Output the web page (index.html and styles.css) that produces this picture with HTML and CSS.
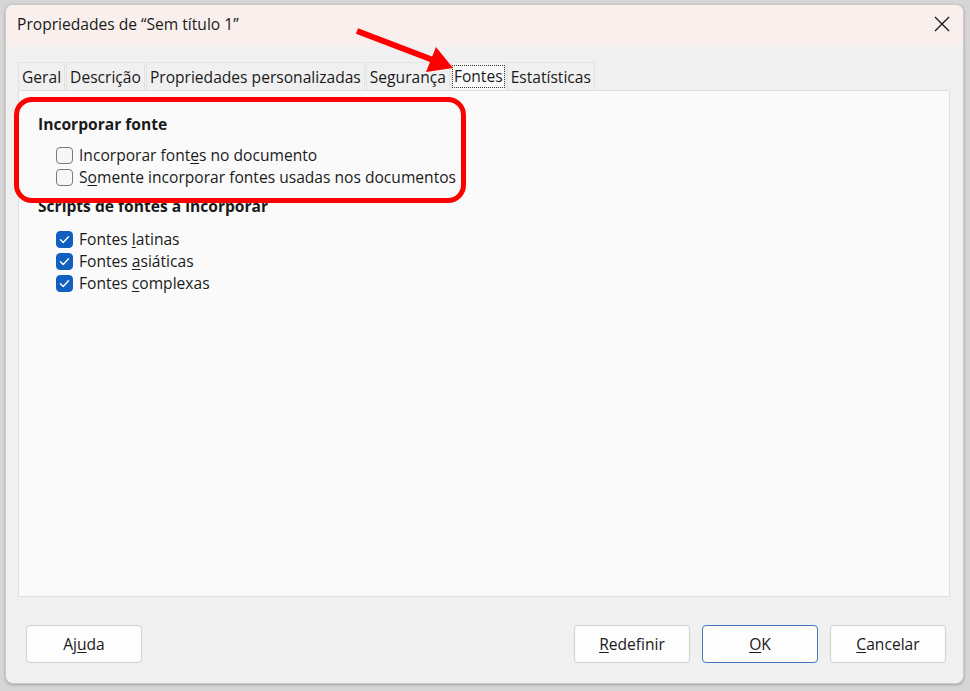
FILE: index.html
```html
<!DOCTYPE html>
<html lang="pt">
<head>
<meta charset="utf-8">
<title>Propriedades</title>
<link rel="stylesheet" href="styles.css">
</head>
<body>
<div class="window">
  <div class="titlebar">
    <span class="title">Propriedades de “Sem título 1”</span>
    <svg class="close" width="16" height="16" viewBox="0 0 16 16"><path d="M1 1 L15 15 M15 1 L1 15" stroke="#1a1a1a" stroke-width="1.4" fill="none"/></svg>
  </div>
  <div class="content">
    <div class="tabs">
      <div class="tab">Geral</div>
      <div class="tab">Descrição</div>
      <div class="tab">Propriedades personalizadas</div>
      <div class="tab">Segurança</div>
      <div class="tab active"><span class="focus">Fontes</span></div>
      <div class="tab">Estatísticas</div>
    </div>
    <div class="panel">
      <div class="group">
        <div class="heading">Incorporar fonte</div>
        <label class="row"><span class="cb"></span><span>Incorporar font<u>e</u>s no documento</span></label>
        <label class="row"><span class="cb"></span><span>S<u>o</u>mente incorporar fontes usadas nos documentos</span></label>
      </div>
      <div class="group second">
        <div class="heading">Scripts de fontes a incorporar</div>
        <label class="row"><span class="cb on"><svg width="17" height="17" viewBox="0 0 17 17"><path d="M4.5 8.8 L7.2 11.4 L12.5 5.8" stroke="#fff" stroke-width="1.4" fill="none" stroke-linecap="round" stroke-linejoin="round"/></svg></span><span>Fontes <u>l</u>atinas</span></label>
        <label class="row"><span class="cb on"><svg width="17" height="17" viewBox="0 0 17 17"><path d="M4.5 8.8 L7.2 11.4 L12.5 5.8" stroke="#fff" stroke-width="1.4" fill="none" stroke-linecap="round" stroke-linejoin="round"/></svg></span><span>Fontes <u>a</u>siáticas</span></label>
        <label class="row"><span class="cb on"><svg width="17" height="17" viewBox="0 0 17 17"><path d="M4.5 8.8 L7.2 11.4 L12.5 5.8" stroke="#fff" stroke-width="1.4" fill="none" stroke-linecap="round" stroke-linejoin="round"/></svg></span><span>Fontes <u>c</u>omplexas</span></label>
      </div>
    </div>
    <div class="buttons">
      <button class="btn help">Aj<u>u</u>da</button>
      <div class="right">
        <button class="btn"><u>R</u>edefinir</button>
        <button class="btn default"><u>O</u>K</button>
        <button class="btn"><u>C</u>ancelar</button>
      </div>
    </div>
  </div>
</div>
<div class="highlight"></div>
<svg class="arrow" width="970" height="100" viewBox="0 0 970 100">
  <line x1="357" y1="31" x2="433" y2="60" stroke="#ff0000" stroke-width="6"/>
  <polygon points="453,68 436,47 426,72" fill="#ff0000"/>
</svg>
</body>
</html>
```

FILE: styles.css
```css
html, body {
  margin: 0;
  padding: 0;
}
body {
  background: #d6d6d6;
  width: 970px;
  height: 691px;
  overflow: hidden;
  position: relative;
  font-family: "Open Sans", "Noto Sans", sans-serif;
  font-size: 15.6px;
  color: #1a1a1a;
}
.window {
  margin: 4px 0 0 5px;
  width: 959px;
  height: 680px;
  box-sizing: border-box;
  background: #f0f0f0;
  border: 1px solid #c9c9c9;
  border-radius: 8px;
  box-shadow: 0 1px 3px rgba(0,0,0,0.25);
  overflow: hidden;
  display: flex;
  flex-direction: column;
}
.titlebar {
  height: 41px;
  flex: none;
  background: #f9f0ee;
  display: flex;
  align-items: center;
  justify-content: space-between;
  padding: 0 13px 3px 11px;
  box-sizing: border-box;
}
.title {
  font-size: 15.6px;
}
.close {
  display: block;
}
.content {
  flex: 1;
  display: flex;
  flex-direction: column;
  padding: 16px 13px 0 12px;
}
.tabs {
  display: flex;
  height: 28px;
}
.tab {
  box-sizing: border-box;
  height: 28px;
  padding: 0 3px;
  margin-right: 1px;
  display: flex;
  align-items: center;
  background: #f0f0f0;
  border: 1px solid #e3e3e3;
  border-bottom: none;
  white-space: nowrap;
}
.tab.active {
  background: #fafafa;
  padding: 0 1px;
}
.focus {
  outline: 1px dotted #333;
  outline-offset: 0;
  padding: 0 1px;
  line-height: 21px;
}
.panel {
  box-sizing: border-box;
  height: 507px;
  background: #fafafa;
  border: 1px solid #e0e0e0;
  padding: 22px 0 0 19px;
}
.heading {
  font-weight: bold;
  height: 22px;
  line-height: 22px;
  margin-bottom: 9px;
}
.row {
  display: flex;
  align-items: center;
  height: 22px;
  padding-left: 18px;
  gap: 6px;
}
.second {
  margin-top: 7px;
}
.second .heading {
  margin-bottom: 11px;
}
.cb {
  box-sizing: border-box;
  width: 17px;
  height: 17px;
  border: 1px solid #7a7a7a;
  border-radius: 4px;
  background: #f7f7f7;
  flex: none;
  display: block;
}
.cb.on {
  background: #1160c0;
  border-color: #1160c0;
}
.cb.on svg {
  display: block;
  margin: -1px;
}
u {
  text-decoration-thickness: 1px;
  text-underline-offset: 2px;
}
.buttons {
  display: flex;
  justify-content: space-between;
  margin-top: 28px;
  padding: 0 4px 0 8px;
}
.right {
  display: flex;
  gap: 12px;
}
.btn {
  box-sizing: border-box;
  width: 116px;
  height: 38px;
  background: #fdfdfd;
  border: 1px solid #d0d0d0;
  border-radius: 4px;
  font-family: inherit;
  font-size: 15.6px;
  color: #1a1a1a;
  padding: 0;
}
.btn.default {
  border-color: #3b79b8;
}
.highlight {
  position: absolute;
  left: 14px;
  top: 97px;
  width: 452px;
  height: 106px;
  box-sizing: border-box;
  border: 5px solid #ff0000;
  border-radius: 18px;
}
.arrow {
  position: absolute;
  left: 0;
  top: 0;
}
```
